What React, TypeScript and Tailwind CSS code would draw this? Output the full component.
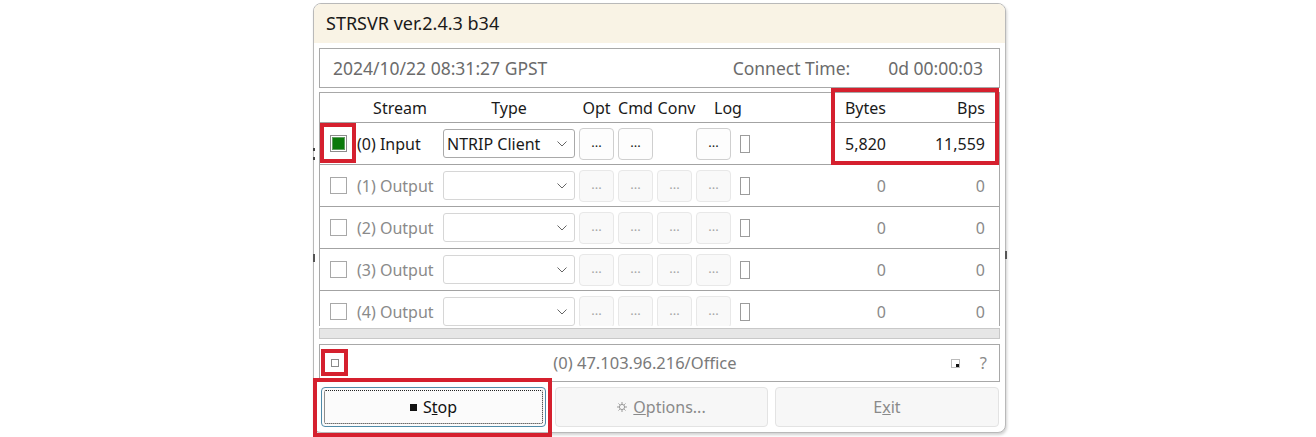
import React from 'react'

type Row = { label: string; type: string; on: boolean; bytes: string; bps: string; conv: boolean }

const rows: Row[] = [
  { label: '(0) Input', type: 'NTRIP Client', on: true, bytes: '5,820', bps: '11,559', conv: false },
  { label: '(1) Output', type: '', on: false, bytes: '0', bps: '0', conv: true },
  { label: '(2) Output', type: '', on: false, bytes: '0', bps: '0', conv: true },
  { label: '(3) Output', type: '', on: false, bytes: '0', bps: '0', conv: true },
  { label: '(4) Output', type: '', on: false, bytes: '0', bps: '0', conv: true },
]

function Chevron() {
  return (
    <svg width="10" height="6" viewBox="0 0 10 6" className="shrink-0">
      <path d="M0.5 0.5 L5 5 L9.5 0.5" fill="none" stroke="#666" strokeWidth="1" />
    </svg>
  )
}

function Dots({ on }: { on: boolean }) {
  return (
    <div
      className={`flex h-[32px] w-[35px] shrink-0 items-center justify-center rounded-[4px] border pb-[2px] text-[13px] ${
        on ? 'border-[#cfcfcf] bg-[#fdfdfd] text-[#1a1a1a]' : 'border-[#e8e8e8] bg-[#f9f9f9] text-[#a6a6a6]'
      }`}
    >
      ...
    </div>
  )
}

function StreamRow({ r }: { r: Row }) {
  const txt = r.on ? 'text-[#1a1a1a]' : 'text-[#8a8a8a]'
  return (
    <div className="flex h-[42px] items-center border-b border-[#a3a3a3] pl-[10px] text-[16px]">
      {r.on ? (
        <div className="flex h-[17px] w-[17px] shrink-0 items-center justify-center border border-[#8c8c8c] bg-white">
          <div className="h-[13px] w-[13px] border border-[#5f9f5f] bg-[#0b7a0b]" />
        </div>
      ) : (
        <div className="h-[17px] w-[17px] shrink-0 border border-[#a8a8a8] bg-white" />
      )}
      <div className={`ml-[10px] w-[86px] shrink-0 whitespace-nowrap ${txt}`}>{r.label}</div>
      <div
        className={`flex h-[29px] w-[132px] shrink-0 items-center justify-between rounded-[3px] border pl-[3px] pr-[7px] text-[#1a1a1a] ${
          r.on ? 'border-[#a9a9a9]' : 'border-[#d6d6d6]'
        }`}
      >
        <span>{r.type}</span>
        <Chevron />
      </div>
      <div className="ml-[4px] flex gap-[4px]">
        <Dots on={r.on} />
        <Dots on={r.on} />
        {r.conv ? <Dots on={r.on} /> : <div className="w-[35px]" />}
        <Dots on={r.on} />
      </div>
      <div className="ml-[9px] h-[18px] w-[10px] shrink-0 border border-[#9c9c9c]" />
      <div className={`w-[136px] shrink-0 text-right ${txt}`}>{r.bytes}</div>
      <div className={`w-[99px] shrink-0 text-right ${txt}`}>{r.bps}</div>
    </div>
  )
}

export default function App() {
  return (
    <div className="relative h-[437px] w-[1316px] overflow-hidden bg-white font-['Noto_Sans','Open_Sans',sans-serif] text-[#1a1a1a]">
      <div className="ml-[313px] mt-[3px] flex h-[430px] w-[693px] flex-col rounded-[8px] border-[1.5px] border-[#b9b9b9] bg-white shadow-[1px_2px_3px_rgba(0,0,0,0.18)]">
        {/* title */}
        <div className="flex h-[39px] shrink-0 items-center rounded-t-[7px] bg-[#f9f3e5] pl-[12px] text-[18px] text-[#1a1a1a]">
          STRSVR ver.2.4.3 b34
        </div>

        <div className="flex flex-col px-[5px] pt-[5px]">
          {/* time */}
          <div className="flex h-[40px] items-center border border-[#a8a8a8] pl-[13px] pr-[16px] text-[17.5px] text-[#6b6b6b]">
            <span>2024/10/22 08:31:27 GPST</span>
            <span className="ml-auto">Connect Time:</span>
            <span className="ml-[38px]">0d 00:00:03</span>
          </div>

          {/* streams */}
          <div className="mt-[4px] h-[234px] overflow-hidden border-x border-t border-[#a8a8a8]">
            <div className="flex h-[30px] items-center border-b border-[#a3a3a3] pl-[37px] text-[16px] text-[#1a1a1a]">
              <div className="w-[86px] text-center">Stream</div>
              <div className="w-[132px] text-center">Type</div>
              <div className="ml-[4px] w-[35px] text-center">Opt</div>
              <div className="ml-[4px] w-[35px] text-center">Cmd</div>
              <div className="ml-[4px] w-[39px] text-center">Conv</div>
              <div className="ml-[4px] w-[56px] text-center">Log</div>
              <div className="w-[130px] text-right">Bytes</div>
              <div className="w-[99px] text-right">Bps</div>
            </div>
            {rows.map(r => (
              <StreamRow key={r.label} r={r} />
            ))}
          </div>

          {/* scrollbar */}
          <div className="mt-[2px] h-[11px] border border-[#c8c8c8] bg-[#e6e6e6]" />

          {/* status */}
          <div className="mt-[5px] flex h-[38px] items-center border border-[#a8a8a8] pl-[11px] pr-[12px] text-[16.5px] text-[#7a7a7a]">
            <div className="h-[8px] w-[8px] border border-[#8a8a8a]" />
            <div className="flex-1 text-center">(0) 47.103.96.216/Office</div>
            <svg width="9" height="9" viewBox="0 0 9 9" className="mr-[20px]">
              <rect x="0.5" y="0.5" width="8" height="8" fill="none" stroke="#777" strokeWidth="1" strokeDasharray="1 1" />
              <rect x="5" y="5" width="3" height="3" fill="#111" />
            </svg>
            <span className="text-[#8a8a8a]">?</span>
          </div>

          {/* buttons */}
          <div className="mt-[5px] flex text-[16px]">
            <div className="ml-[2px] flex h-[40px] w-[225px] items-center justify-center rounded-[4px] border border-[#4f8aa8] bg-[#fbfbfb] p-[2px]">
              <div className="flex h-full w-full items-center justify-center gap-[6px] rounded-[2px] border border-dotted border-[#222] text-[#111]">
                <div className="h-[7px] w-[7px] bg-[#111]" />
                <span>
                  S<span className="underline">t</span>op
                </span>
              </div>
            </div>
            <div className="ml-[9px] flex h-[40px] w-[213px] items-center justify-center gap-[6px] rounded-[4px] border border-[#e3e3e3] bg-[#f7f7f7] text-[#8a8a8a]">
              <svg width="10" height="10" viewBox="0 0 10 10">
                <circle cx="5" cy="5" r="2.6" fill="none" stroke="#999" strokeWidth="1" />
                <path d="M5 0v2 M5 8v2 M0 5h2 M8 5h2 M1.5 1.5l1.3 1.3 M7.2 7.2l1.3 1.3 M8.5 1.5l-1.3 1.3 M2.8 7.2l-1.3 1.3" stroke="#999" strokeWidth="1" />
              </svg>
              <span>
                <span className="underline">O</span>ptions...
              </span>
            </div>
            <div className="ml-[7px] flex h-[40px] w-[224px] items-center justify-center rounded-[4px] border border-[#e3e3e3] bg-[#f7f7f7] text-[#8a8a8a]">
              <span>
                E<span className="underline">x</span>it
              </span>
            </div>
          </div>
        </div>
      </div>

      {/* edge marks */}
      <div className="absolute left-[313px] top-[148px] h-[12px] w-[2px] border-y-[3px] border-[#444]" />
      <div className="absolute left-[313px] top-[254px] h-[8px] w-[2px] bg-[#555]" />
      <div className="absolute left-[1005px] top-[251px] h-[8px] w-[2px] bg-[#555]" />

      {/* red annotations */}
      <div className="absolute left-[320px] top-[123px] h-[40px] w-[36px] border-4 border-[#d5202e]" />
      <div className="absolute left-[831px] top-[88px] h-[77px] w-[168px] border-4 border-[#d5202e]" />
      <div className="absolute left-[321px] top-[349px] h-[27px] w-[27px] border-4 border-[#d5202e]" />
      <div className="absolute left-[313px] top-[378px] h-[59px] w-[239px] border-4 border-[#d5202e]" />
    </div>
  )
}
